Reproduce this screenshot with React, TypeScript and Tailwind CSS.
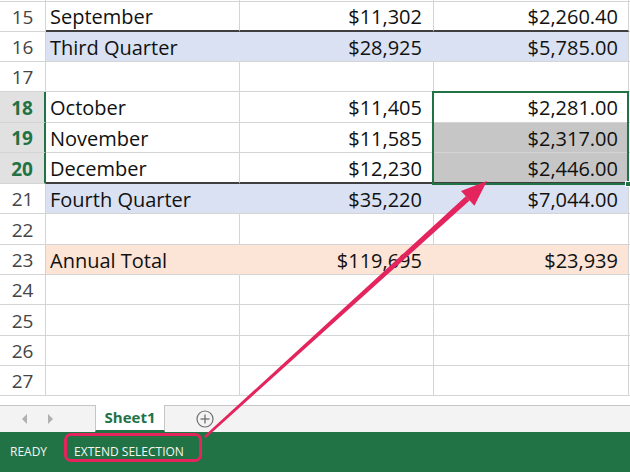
import React from "react";

type Row = {
  n: number;
  a?: string;
  b?: string;
  c?: string;
  h: string;
  band?: "blue" | "peach";
  darkBottom?: boolean;
  picked?: boolean;
  shaded?: boolean;
};

const ROWS: Row[] = [
  { n: 15, a: "September", b: "$11,302", c: "$2,260.40", h: "h-[30px]", darkBottom: true },
  { n: 16, a: "Third Quarter", b: "$28,925", c: "$5,785.00", h: "h-[30px]", band: "blue" },
  { n: 17, h: "h-[30px]" },
  { n: 18, a: "October", b: "$11,405", c: "$2,281.00", h: "h-[31px]", picked: true },
  { n: 19, a: "November", b: "$11,585", c: "$2,317.00", h: "h-[30px]", picked: true, shaded: true },
  { n: 20, a: "December", b: "$12,230", c: "$2,446.00", h: "h-[31px]", picked: true, shaded: true, darkBottom: true },
  { n: 21, a: "Fourth Quarter", b: "$35,220", c: "$7,044.00", h: "h-[30px]", band: "blue" },
  { n: 22, h: "h-[31px]" },
  { n: 23, a: "Annual Total", b: "$119,695", c: "$23,939", h: "h-[30px]", band: "peach" },
  { n: 24, h: "h-[30px]" },
  { n: 25, h: "h-[31px]" },
  { n: 26, h: "h-[30px]" },
  { n: 27, h: "h-[30px]" },
];

function GridRow({ row }: { row: Row }) {
  const fill =
    row.band === "blue" ? "bg-[#d9e1f2]" : row.band === "peach" ? "bg-[#fce4d6]" : "bg-white";
  const inner = row.band ? "border-r-transparent" : "border-r-[#d4d4d4]";
  const bottom = row.darkBottom
    ? "border-b-2 border-b-[#3f3f3f]"
    : "border-b border-b-[#d4d4d4]";

  return (
    <div className={`flex ${row.h}`}>
      {/* row header */}
      <div
        className={`flex w-[46px] shrink-0 items-center justify-center border-b border-b-[#d4d4d4] pt-[2px] ${
          row.picked
            ? "border-r-2 border-r-[#217346] bg-[#e1e1e1] font-bold text-[#217346]"
            : "border-r border-r-[#d4d4d4] bg-white text-[#444444]"
        } text-[19px]`}
      >
        {row.n}
      </div>
      <div className={`flex w-[194px] shrink-0 items-center border-r pl-[4px] pt-[2px] ${inner} ${bottom} ${fill}`}>
        {row.a}
      </div>
      <div
        className={`flex w-[194px] shrink-0 items-center justify-end border-r pr-[11px] pt-[2px] ${inner} ${bottom} ${fill}`}
      >
        {row.b}
      </div>
      <div
        className={`flex w-[195px] shrink-0 items-center justify-end border-r border-r-[#d4d4d4] pr-[10px] pt-[2px] ${
          row.darkBottom ? "border-b-2 border-b-[#3f3f3f]" : "border-b border-b-[#d4d4d4]"
        } ${row.shaded ? "bg-[#c6c6c6]" : fill}`}
      >
        {row.c}
      </div>
      <div className="flex-1 border-b border-b-[#d4d4d4] bg-white" />
    </div>
  );
}

function Arrow() {
  return (
    <svg
      className="pointer-events-none absolute left-0 top-0"
      width="630"
      height="472"
      viewBox="0 0 630 472"
    >
      <polygon
        points="204.2,436.1 205.8,437.9 469.6,200.5 465.8,196.3"
        fill="#e3245d"
      />
      <polygon points="487,181 474.4,205.8 461,191" fill="#e3245d" />
    </svg>
  );
}

export default function App() {
  return (
    <div className="relative h-[472px] w-[630px] overflow-hidden bg-white font-['Open_Sans',sans-serif] text-[20px] text-[#111111]">
      <div className="relative">
        {/* partial row above */}
        <div className="flex h-[2px]">
          <div className="w-[46px] shrink-0 border-b border-r border-[#d4d4d4]" />
          <div className="w-[194px] shrink-0 border-b border-r border-[#d4d4d4]" />
          <div className="w-[194px] shrink-0 border-b border-r border-[#d4d4d4]" />
          <div className="w-[195px] shrink-0 border-b border-r border-[#d4d4d4]" />
          <div className="flex-1 border-b border-[#d4d4d4]" />
        </div>
        {ROWS.map((r) => (
          <GridRow key={r.n} row={r} />
        ))}

        {/* selection outline */}
        <div className="absolute left-[432px] top-[91px] h-[94px] w-[197px] border-2 border-[#217346]" />
        <div className="absolute left-[625px] top-[181px] h-[6px] w-[6px] border border-white bg-[#217346]" />
      </div>

      <div className="h-[9px] bg-white" />

      {/* sheet tabs */}
      <div className="flex h-[27px] items-stretch border-t border-[#c6c6c6] bg-[#f3f3f3]">
        <div className="flex w-[95px] items-center gap-[20px] pl-[22px]">
          <svg width="6" height="10" viewBox="0 0 6 10">
            <polygon points="5,0 5,10 0,5" fill="#b0b0b0" />
          </svg>
          <svg width="6" height="10" viewBox="0 0 6 10">
            <polygon points="0,0 0,10 5,5" fill="#b0b0b0" />
          </svg>
        </div>
        <div className="-mt-px flex w-[70px] items-center justify-center border-x border-b-2 border-x-[#c6c6c6] border-b-[#217346] bg-white text-[15px] font-bold text-[#217346]">
          Sheet1
        </div>
        <div className="flex items-center pl-[31px]">
          <svg width="18" height="18" viewBox="0 0 18 18">
            <circle cx="9" cy="9" r="8" fill="none" stroke="#6e6e6e" strokeWidth="1.2" />
            <line x1="9" y1="4.5" x2="9" y2="13.5" stroke="#6e6e6e" strokeWidth="1.3" />
            <line x1="4.5" y1="9" x2="13.5" y2="9" stroke="#6e6e6e" strokeWidth="1.3" />
          </svg>
        </div>
      </div>

      {/* status bar */}
      <div className="flex h-[40px] items-center bg-[#217346] text-[12px] leading-[16px] text-[#f2f7f3]">
        <span className="pl-[10px]">READY</span>
        <span className="relative ml-[27px]">
          EXTEND SELECTION
          <span className="absolute -bottom-[2px] -left-[10px] -right-[18px] -top-[11px] rounded-[7px] border-[3px] border-[#e3245d]" />
        </span>
      </div>

      <Arrow />
    </div>
  );
}
